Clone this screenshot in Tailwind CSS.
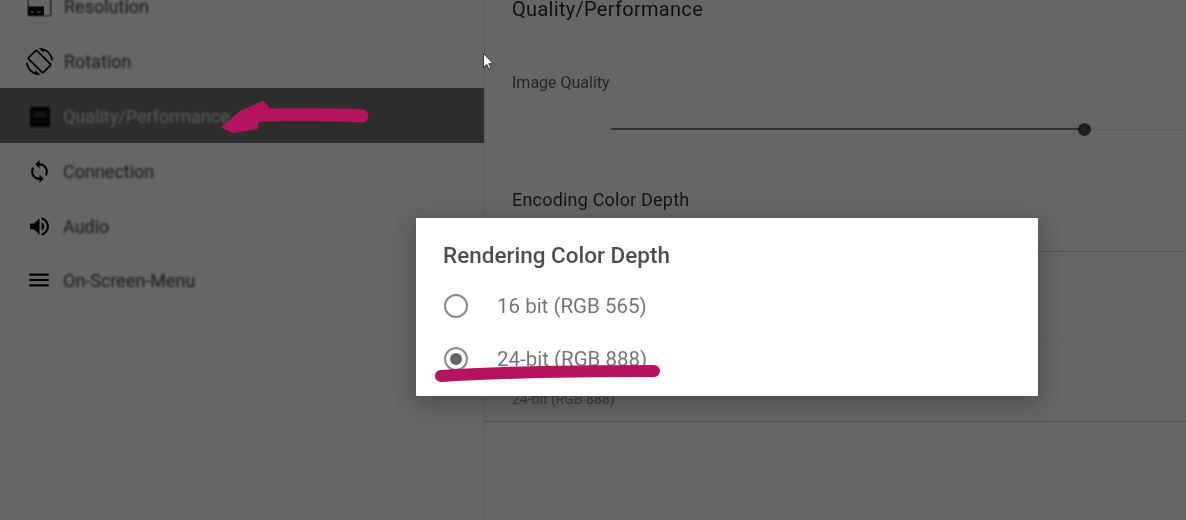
<!doctype html>
<html>
<head>
<meta charset="utf-8">
<script src="https://cdn.jsdelivr.net/npm/@tailwindcss/browser@4"></script>
</head>
<body class="m-0 overflow-hidden">
<div class="relative w-[1186px] h-[520px] overflow-hidden bg-white flex font-['Roboto',sans-serif]">
  <aside class="w-[485px] h-[542px] shrink-0 border-r border-black/10 -mt-[22px] text-[18px] text-black/75">
    <div class="h-[55px] pt-[2px] flex items-center pl-[26px] gap-[11px]">
      <svg class="w-[27px] h-[27px] shrink-0 blur-[0.7px]" viewBox="0 0 24 24"><path fill="#000" opacity=".4" d="M21 3H3c-1.100 0-2 .9-2 2v14c0 1.100.9 2 2 2h18c1.100 0 2-.9 2-2V5c0-1.100-.9-2-2-2zm0 16H3V5h18v14z"/><rect x="2" y="12" width="14" height="8" rx="1" fill="#000"/><rect x="4" y="16" width="3" height="2" fill="#777"/><rect x="10" y="16" width="3" height="2" fill="#777"/></svg>
      <span class="blur-[0.8px]">Resolution</span>
    </div>
    <div class="h-[55px] pt-[2px] flex items-center pl-[26px] gap-[11px]">
      <svg class="w-[27px] h-[27px] shrink-0 blur-[0.7px]" viewBox="0 0 24 24"><path fill="#000" d="M16.480 2.520c3.270 1.550 5.610 4.720 5.970 8.480h1.500C23.440 4.840 18.290 0 12 0l-.66.03 3.810 3.810 1.330-1.320zm-6.250-.77c-.59-.59-1.540-.59-2.120 0L1.750 8.110c-.59.59-.59 1.540 0 2.120l12.020 12.020c.59.59 1.540.59 2.120 0l6.360-6.360c.59-.59.59-1.540 0-2.120L10.230 1.750zm4.600 19.440L2.810 9.170l6.360-6.360 12.020 12.020-6.360 6.360zm-7.310.29C4.250 19.940 1.910 16.760 1.550 13H.05C.56 19.160 5.710 24 12 24l.66-.03-3.810-3.810-1.330 1.320z"/></svg>
      <span class="blur-[0.8px]">Rotation</span>
    </div>
    <div class="h-[55px] pt-[2px] flex items-center pl-[29px] gap-[12px] bg-[#737372] text-white/75">
      <svg class="w-[22px] h-[22px] shrink-0 blur-[0.8px]" viewBox="0 0 22 22"><rect width="20" height="20" x="1" y="1" rx="2" fill="#000"/><path d="M4 5h14v7H4zM4 15h14v1.500H4z" fill="#333"/></svg>
      <span class="blur-[0.8px]">Quality/Performance</span>
    </div>
    <div class="h-[55px] pt-[2px] flex items-center pl-[27px] gap-[11px]">
      <svg class="w-[25px] h-[25px] shrink-0 blur-[0.5px]" viewBox="0 0 24 24"><path fill="#000" d="M12 4V1L8 5l4 4V6c3.310 0 6 2.690 6 6 0 1.010-.25 1.970-.7 2.800l1.460 1.460C19.540 15.030 20 13.570 20 12c0-4.420-3.580-8-8-8zm0 14c-3.310 0-6-2.690-6-6 0-1.010.25-1.970.7-2.800L5.240 7.740C4.460 8.970 4 10.430 4 12c0 4.420 3.580 8 8 8v3l4-4-4-4v3z"/></svg>
      <span class="blur-[0.8px]">Connection</span>
    </div>
    <div class="h-[55px] pt-[2px] flex items-center pl-[27px] gap-[11px]">
      <svg class="w-[25px] h-[25px] shrink-0 blur-[0.5px]" viewBox="0 0 24 24"><path fill="#000" d="M3 9v6h4l5 5V4L7 9H3zm13.500 3c0-1.770-1.020-3.290-2.500-4.030v8.050c1.480-.73 2.500-2.250 2.500-4.020zM14 3.230v2.060c2.890.86 5 3.540 5 6.710s-2.110 5.850-5 6.710v2.060c4.010-.91 7-4.490 7-8.770s-2.990-7.860-7-8.770z"/></svg>
      <span class="blur-[0.8px]">Audio</span>
    </div>
    <div class="h-[54px] flex items-center pl-[26px] gap-[11px]">
      <svg class="w-[26px] h-[26px] shrink-0 blur-[0.5px]" viewBox="0 0 24 24"><path fill="#000" d="M3 18h18v-2H3v2zm0-5h18v-2H3v2zm0-7v2h18V6H3z"/></svg>
      <span class="blur-[0.8px]">On-Screen-Menu</span>
    </div>
  </aside>
  <main class="flex-1 min-w-0 text-black/80 blur-[0.7px]">
    <div class="pl-[27px]">
      <h1 class="text-[20px] leading-[18px] tracking-[0.3px] h-[52px] text-black/85">Quality/Performance</h1>
      <div class="h-[120px]">
        <div class="pt-[22px] text-[16px] leading-[18px] text-black/65">Image Quality</div>
        <div class="ml-[99px] mt-[31px] flex items-center h-[12px]">
          <div class="w-[468px] h-[2px] bg-black/50"></div>
          <div class="w-[13px] h-[13px] rounded-full bg-black/70 -ml-[1px] shrink-0"></div>
          <div class="flex-1 h-[1px] bg-black/10"></div>
        </div>
      </div>
      <div class="h-[80px] pt-[16px] border-b border-black/20 -ml-[27px] pl-[27px]">
        <div class="text-[18px] leading-[24px] tracking-[0.2px] text-black/80">Encoding Color Depth</div>
      </div>
      <div class="h-[86px] border-b border-black/5 -ml-[27px]"></div>
      <div class="h-[84px] border-b border-black/20 -ml-[27px] pl-[27px] pt-[53px]">
        <div class="text-[14px] leading-[16px] text-black/40">24-bit (RGB 888)</div>
      </div>
    </div>
  </main>

  <div class="absolute inset-0 bg-black/60"></div>

  <div class="absolute left-[416px] top-[218px] w-[622px] h-[178px] bg-white rounded-[1px] shadow-[0_6px_24px_rgba(0,0,0,0.3)] pl-[28px] overflow-hidden">
    <div class="pt-[24px] text-[22.500px] leading-[26px] font-medium text-black/70 blur-[0.6px] -ml-[1px]">Rendering Color Depth</div>
    <div class="mt-[26px] flex items-center h-[24px] gap-[29px] text-[20.500px] text-black/55 blur-[0.7px]">
      <span class="w-[24px] h-[24px] rounded-full border-2 border-[#8a8a8a] shrink-0"></span>
      <span>16 bit (RGB 565)</span>
    </div>
    <div class="mt-[29px] flex items-center h-[24px] gap-[29px] text-[20.500px] text-black/55 blur-[0.7px]">
      <span class="w-[24px] h-[24px] rounded-full border-2 border-[#8a8a8a] shrink-0 flex items-center justify-center"><span class="w-[12px] h-[12px] rounded-full bg-[#666]"></span></span>
      <span>24-bit (RGB 888)</span>
    </div>
  </div>

  <svg class="absolute inset-0 w-[1186px] h-[520px] pointer-events-none" viewBox="0 0 1186 520" fill="none">
    <path d="M362 116 C 340 114, 300 115, 262 115" stroke="#b5135f" stroke-width="13" stroke-linecap="round"/>
    <path d="M263 102 L 268 107 L 264 120 L 257 122 L 257 128 L 233 132 L 223 127 L 240 112 Z" fill="#b5135f" stroke="#b5135f" stroke-width="2" stroke-linejoin="round"/>
    <path d="M441 376 C 500 372, 580 371, 654 371" stroke="#b5135f" stroke-width="12" stroke-linecap="round"/>
    <path d="M483.500 53.500v14l3.300-3 2.200 4.800 2-1-2.200-4.600h4.400z" fill="#fff" stroke="#333" stroke-width="1"/>
  </svg>
</div>
</body>
</html>
